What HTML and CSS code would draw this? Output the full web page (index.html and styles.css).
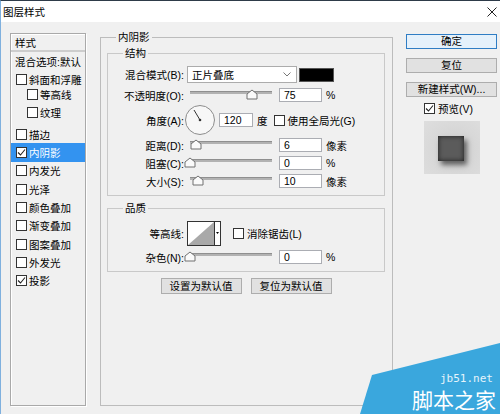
FILE: index.html
```html
<!DOCTYPE html>
<html lang="zh-CN">
<head>
<meta charset="utf-8">
<title>图层样式</title>
<link rel="stylesheet" href="styles.css">
</head>
<body>
<div class="window">
  <header class="titlebar">
    <span class="title">图层样式</span>
    <svg class="close" width="10" height="10" viewBox="0 0 10 10"><path d="M0.5 0.5L9.5 9.5M9.5 0.5L0.5 9.5" stroke="#222" stroke-width="1"/></svg>
  </header>

  <div class="content">
    <nav class="styles-list">
      <div class="list-head">样式</div>
      <div class="list-item plain">混合选项:默认</div>
      <div class="list-item"><span class="cb"></span>斜面和浮雕</div>
      <div class="list-item sub"><span class="cb"></span>等高线</div>
      <div class="list-item sub"><span class="cb"></span>纹理</div>
      <div class="list-item"><span class="cb"></span>描边</div>
      <div class="list-item active"><span class="cb"><svg width="9" height="9" viewBox="0 0 9 9"><path d="M1 4.5L3.5 7L8 1.5" fill="none" stroke="#222" stroke-width="1.1"/></svg></span>内阴影</div>
      <div class="list-item"><span class="cb"></span>内发光</div>
      <div class="list-item"><span class="cb"></span>光泽</div>
      <div class="list-item"><span class="cb"></span>颜色叠加</div>
      <div class="list-item"><span class="cb"></span>渐变叠加</div>
      <div class="list-item"><span class="cb"></span>图案叠加</div>
      <div class="list-item"><span class="cb"></span>外发光</div>
      <div class="list-item"><span class="cb"><svg width="9" height="9" viewBox="0 0 9 9"><path d="M1 4.5L3.5 7L8 1.5" fill="none" stroke="#222" stroke-width="1.1"/></svg></span>投影</div>
    </nav>

    <fieldset class="group main">
      <legend>内阴影</legend>

      <fieldset class="group sub structure">
        <legend>结构</legend>
        <div class="row r-blend">
          <span class="lbl">混合模式(B):</span>
          <div class="select">正片叠底<svg class="chev" width="8" height="5" viewBox="0 0 8 5"><path d="M0.5 0.5L4 4L7.5 0.5" fill="none" stroke="#777"/></svg></div>
          <div class="swatch"></div>
        </div>
        <div class="row r-field">
          <span class="lbl">不透明度(O):</span>
          <svg class="slider" width="88" height="14" viewBox="0 0 88 14"><rect x="3" y="3" width="82" height="3" fill="#b2b2b2"/><rect x="3" y="3" width="82" height="1" fill="#8f8f8f"/><path d="M65 2L70 6V11H60V6Z" fill="#fafafa" stroke="#707070"/></svg>
          <div class="input">75</div>
          <span class="unit">%</span>
        </div>
        <div class="row r-angle">
          <span class="lbl">角度(A):</span>
          <svg class="dial" width="30" height="30" viewBox="0 0 30 30"><circle cx="15" cy="15" r="14.5" fill="#f7f7f7" stroke="#8c8c8c"/><path d="M15 15L9 5" stroke="#333" stroke-width="1"/><circle cx="15" cy="15" r="1.3" fill="#333"/></svg>
          <div class="input narrow">120</div>
          <span class="unit">度</span>
          <span class="cb global"></span>
          <span class="cb-text">使用全局光(G)</span>
        </div>
        <div class="row r-field">
          <span class="lbl">距离(D):</span>
          <svg class="slider" width="88" height="14" viewBox="0 0 88 14"><rect x="3" y="3" width="82" height="3" fill="#b2b2b2"/><rect x="3" y="3" width="82" height="1" fill="#8f8f8f"/><path d="M9 2L14 6V11H4V6Z" fill="#fafafa" stroke="#707070"/></svg>
          <div class="input">6</div>
          <span class="unit">像素</span>
        </div>
        <div class="row r-field">
          <span class="lbl">阻塞(C):</span>
          <svg class="slider" width="88" height="14" viewBox="0 0 88 14"><rect x="3" y="3" width="82" height="3" fill="#b2b2b2"/><rect x="3" y="3" width="82" height="1" fill="#8f8f8f"/><path d="M3 2L8 6V11H-2V6Z" fill="#fafafa" stroke="#707070"/></svg>
          <div class="input">0</div>
          <span class="unit">%</span>
        </div>
        <div class="row r-field">
          <span class="lbl">大小(S):</span>
          <svg class="slider" width="88" height="14" viewBox="0 0 88 14"><rect x="3" y="3" width="82" height="3" fill="#b2b2b2"/><rect x="3" y="3" width="82" height="1" fill="#8f8f8f"/><path d="M11 2L16 6V11H6V6Z" fill="#fafafa" stroke="#707070"/></svg>
          <div class="input">10</div>
          <span class="unit">像素</span>
        </div>
      </fieldset>

      <fieldset class="group sub quality">
        <legend>品质</legend>
        <div class="row r-contour">
          <span class="lbl">等高线:</span>
          <svg class="contour" width="34" height="25" viewBox="0 0 34 25"><rect x="0.5" y="0.5" width="33" height="24" fill="#fff" stroke="#333"/><polygon points="1,24 27,1 27,24" fill="#a9a9a9"/><line x1="27.5" y1="0" x2="27.5" y2="25" stroke="#333"/><polygon points="29,11 32,11 30.5,13" fill="#000"/></svg>
          <span class="cb aa"></span>
          <span class="cb-text">消除锯齿(L)</span>
        </div>
        <div class="row r-field">
          <span class="lbl">杂色(N):</span>
          <svg class="slider" width="88" height="14" viewBox="0 0 88 14"><rect x="3" y="3" width="82" height="3" fill="#b2b2b2"/><rect x="3" y="3" width="82" height="1" fill="#8f8f8f"/><path d="M3 2L8 6V11H-2V6Z" fill="#fafafa" stroke="#707070"/></svg>
          <div class="input">0</div>
          <span class="unit">%</span>
        </div>
      </fieldset>

      <div class="defaults">
        <button class="btn">设置为默认值</button>
        <button class="btn">复位为默认值</button>
      </div>
    </fieldset>

    <aside class="actions">
      <button class="btn primary">确定</button>
      <button class="btn">复位</button>
      <button class="btn">新建样式(W)...</button>
      <div class="preview-check"><span class="cb"><svg width="9" height="9" viewBox="0 0 9 9"><path d="M1 4.5L3.5 7L8 1.5" fill="none" stroke="#222" stroke-width="1.1"/></svg></span><span class="cb-text">预览(V)</span></div>
      <div class="preview"><div class="preview-square"></div></div>
    </aside>
  </div>

  <div class="watermark">
    <svg width="140" height="72" viewBox="0 0 140 72">
      <polygon points="0,72 12,33 140,1 140,72" fill="#3aa7dd"/>
      <text x="80" y="40" class="wm-url">jb51.net</text>
      <text x="52" y="66" class="wm-name">脚本之家</text>
    </svg>
  </div>
</div>
</body>
</html>
```

FILE: styles.css
```css
* { box-sizing: border-box; }

html, body {
  margin: 0;
  padding: 0;
}

body {
  width: 500px;
  height: 414px;
  overflow: hidden;
  background: #f0f0f0;
  font-family: "Liberation Sans", "Noto Sans CJK SC", sans-serif;
  font-size: 10.5px;
  color: #000;
}

.window {
  position: relative;
  width: 500px;
  height: 414px;
  border-left: 1px solid #7fb0de;
  border-top: 1px solid #2e3b49;
  overflow: hidden;
}

/* title bar */
.titlebar {
  height: 21px;
  background: #fff;
  display: flex;
  align-items: center;
  justify-content: space-between;
  padding: 0 3px 0 2px;
}
.title { line-height: 14px; }
.close { display: block; }

/* content */
.content {
  display: flex;
  align-items: flex-start;
  padding: 11px 0 0 9px;
}

/* left list */
.styles-list {
  width: 76px;
  height: 373px;
  flex-shrink: 0;
  margin-right: 14px;
  border: 1px solid #a9a9a9;
  box-shadow: 1px 1px 0 #fff, inset 1px 1px 0 #fff;
}
.list-head {
  height: 18px;
  line-height: 18px;
  padding-left: 4px;
  border-bottom: 2px solid #cdcdcd;
}
.list-item {
  height: 18.3px;
  display: flex;
  align-items: center;
  padding-left: 5px;
  white-space: nowrap;
}
.list-item.plain { padding-left: 4px; }
.list-item.sub { padding-left: 16px; }
.list-item.active {
  background: #3393f0;
  color: #fff;
}
.list-item .cb { margin-right: 2px; }

.cb {
  width: 11px;
  height: 11px;
  flex-shrink: 0;
  border: 1px solid #333;
  background: #fff;
  display: inline-flex;
  align-items: center;
  justify-content: center;
}
.cb svg { display: block; }

/* groups */
.group {
  margin: 0;
  min-width: 0;
  border: 1px solid #bcbcbc;
}
.group legend {
  padding: 0 2px;
  line-height: 14px;
}
.main {
  width: 293px;
  height: 376px;
  margin-top: -3px;
  padding: 2px 7px 0 6px;
}
.main > legend { margin-left: 9px; }

.sub {
  padding: 0 0 7px 0;
  border-color: #c9c9c9;
}
.sub > legend { margin-left: 15px; }
.quality { margin-top: 5px; }

.row {
  display: flex;
  align-items: center;
  white-space: nowrap;
}
.lbl {
  width: 76px;
  flex-shrink: 0;
  text-align: right;
}
.r-blend { margin-top: 6px; height: 17px; }
.r-field { margin-top: 4px; height: 14px; }
.structure .r-blend + .r-field { margin-top: 5px; }
.r-angle { margin-top: 3px; height: 30px; }
.r-angle + .r-field { margin-top: 3px; }
.r-contour { margin-top: 6px; height: 25px; }

.select {
  width: 110px;
  height: 17px;
  margin-left: 3px;
  background: #fff;
  border: 1px solid #acacac;
  display: flex;
  align-items: center;
  justify-content: space-between;
  padding: 0 5px 0 4px;
}
.chev { display: block; }
.swatch {
  width: 35px;
  height: 14px;
  margin-left: 2px;
  background: #000;
  border: 1px solid #555;
}

.slider {
  display: block;
  margin-left: 3px;
  overflow: visible;
  flex-shrink: 0;
}
.input {
  width: 43px;
  height: 14px;
  margin-left: 4px;
  background: #fff;
  border: 1px solid #abadb3;
  padding-left: 4px;
  line-height: 12px;
}
.input.narrow { width: 34px; }
.unit { margin-left: 4px; }

.dial { display: block; margin-left: 1px; }
.global { margin-left: 6px; }
.cb-text { margin-left: 3px; }

.contour { display: block; margin-left: 3px; }
.aa { margin-left: 12px; }

.defaults {
  display: flex;
  justify-content: center;
  gap: 9px;
  margin-top: 6px;
}

.btn {
  font: inherit;
  color: #000;
  margin: 0;
  padding: 0;
  height: 16px;
  line-height: 14px;
  background: #e1e1e1;
  border: 1px solid #adadad;
  border-radius: 0;
}
.defaults .btn { width: 81px; }

/* right column */
.actions {
  width: 91px;
  margin-left: 13px;
  display: flex;
  flex-direction: column;
  flex-shrink: 0;
}
.actions .btn {
  width: 91px;
  height: 15px;
  line-height: 13px;
  margin-bottom: 9px;
}
.actions .btn.primary {
  margin-top: 1px;
  background: #e5f1fb;
  border-color: #2f7dc4;
}
.preview-check {
  display: flex;
  align-items: center;
  margin: -3px 0 0 18px;
  height: 11px;
}
.preview {
  width: 56px;
  height: 53px;
  margin: 7px 0 0 18px;
  padding: 15px 0 0 14px;
  background: radial-gradient(circle at 55% 55%, #cfcfcf 0%, #d9d9d9 60%, #dedede 100%);
}
.preview-square {
  width: 26px;
  height: 25px;
  background: #5b5b5b;
  box-shadow: 3px 4px 5px rgba(0, 0, 0, 0.55), inset 0 0 5px #1e1e1e;
}

/* watermark overlay */
.watermark {
  position: absolute;
  right: 0;
  bottom: 0;
  width: 140px;
  height: 72px;
}
.watermark svg { display: block; }
.wm-url {
  font-family: "DejaVu Sans Mono", monospace;
  font-size: 11px;
  fill: #e6f4fb;
}
.wm-name {
  font-family: "Noto Sans CJK SC", sans-serif;
  font-size: 21px;
  fill: #fff;
}
```
